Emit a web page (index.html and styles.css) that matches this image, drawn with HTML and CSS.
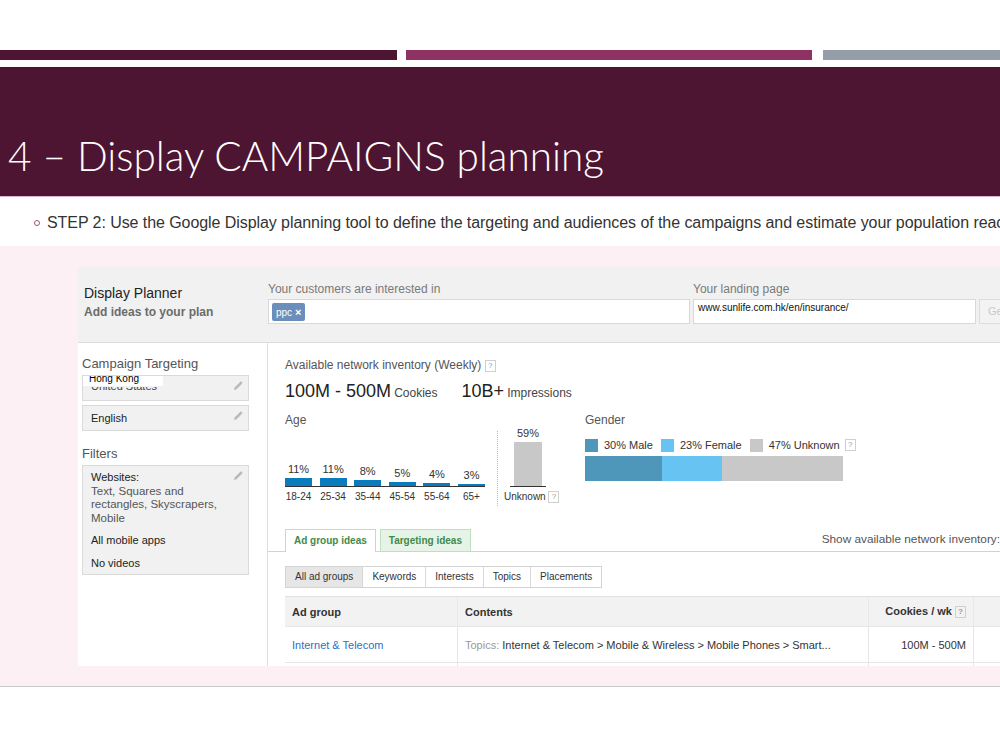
FILE: index.html
```html
<!DOCTYPE html>
<html lang="en">
<head>
    <meta charset="UTF-8">
    <title>Display Campaigns Planning</title>
    <link rel="stylesheet" href="styles.css">
</head>
<body>
    <div class="stripes">
        <span class="stripe dark"></span>
        <span class="stripe plum"></span>
        <span class="stripe grey"></span>
    </div>
    <div class="title-band">
        <h1>4 – Display CAMPAIGNS planning</h1>
    </div>
    <ul class="steps">
        <li>STEP 2: Use the Google Display planning tool to define the targeting and audiences of the campaigns and estimate your population reach</li>
    </ul>

    <div class="shot-panel">
        <div class="planner">
            <div class="planner-head">
                <div class="brand">
                    <div class="brand-title">Display Planner</div>
                    <div class="brand-sub">Add ideas to your plan</div>
                </div>
                <div class="field interest">
                    <label>Your customers are interested in</label>
                    <div class="input"><span class="chip">ppc <b>×</b></span></div>
                </div>
                <div class="field landing">
                    <label>Your landing page</label>
                    <div class="input url">www.sunlife.com.hk/en/insurance/</div>
                </div>
                <div class="field">
                    <label>&nbsp;</label>
                    <div class="get-btn">Get ideas</div>
                </div>
            </div>

            <div class="planner-body">
                <aside class="sidebar">
                    <h4>Campaign Targeting</h4>
                    <div class="tbox location">
                        <span class="new-loc">Hong Kong</span>
                        <div class="old-clip"><span class="old">United States</span></div>
                        <svg class="pencil" viewBox="0 0 12 12"><path d="M1 11 L1.8 8.2 L8.6 1.4 L10.6 3.4 L3.8 10.2 Z"/></svg>
                    </div>
                    <div class="tbox">
                        English
                        <svg class="pencil" viewBox="0 0 12 12"><path d="M1 11 L1.8 8.2 L8.6 1.4 L10.6 3.4 L3.8 10.2 Z"/></svg>
                    </div>
                    <h4 class="filters">Filters</h4>
                    <div class="tbox filter-box">
                        <div class="dark">Websites:</div>
                        <div>Text, Squares and rectangles, Skyscrapers, Mobile</div>
                        <div class="dark gap">All mobile apps</div>
                        <div class="dark gap">No videos</div>
                        <svg class="pencil" viewBox="0 0 12 12"><path d="M1 11 L1.8 8.2 L8.6 1.4 L10.6 3.4 L3.8 10.2 Z"/></svg>
                    </div>
                </aside>

                <section class="content">
                    <div class="inv-title">Available network inventory (Weekly) <span class="help">?</span></div>
                    <div class="totals">
                        <span class="big">100M - 500M</span> <span class="unit">Cookies</span>
                        <span class="big second">10B+</span> <span class="unit">Impressions</span>
                    </div>

                    <div class="demo">
                        <div class="age">
                            <div class="sub-title">Age</div>
                            <div class="age-chart">
                                <div class="age-main">
                                    <div class="plot" id="agePlot"></div>
                                    <div class="x-labels" id="ageLabels"></div>
                                </div>
                                <div class="divider"></div>
                                <div class="age-unknown">
                                    <div class="plot unk" id="unkPlot"></div>
                                    <div class="unk-label">Unknown <span class="help">?</span></div>
                                </div>
                            </div>
                        </div>

                        <div class="gender">
                            <div class="sub-title">Gender</div>
                            <div class="legend">
                                <span class="sw male"></span>30% Male
                                <span class="sw female"></span>23% Female
                                <span class="sw unknown"></span>47% Unknown <span class="help">?</span>
                            </div>
                            <div class="gender-bar" id="genderBar"></div>
                        </div>
                    </div>

                    <div class="tab-row">
                        <div class="tabs">
                            <span class="tab active">Ad group ideas</span>
                            <span class="tab">Targeting ideas</span>
                        </div>
                        <div class="show-inv">Show available network inventory:</div>
                    </div>

                    <div class="btn-group">
                        <span class="on">All ad groups</span>
                        <span>Keywords</span>
                        <span>Interests</span>
                        <span>Topics</span>
                        <span>Placements</span>
                    </div>

                    <table class="ideas">
                        <thead>
                            <tr>
                                <th class="c-group">Ad group</th>
                                <th class="c-contents">Contents</th>
                                <th class="c-cookies">Cookies / wk <span class="help">?</span></th>
                                <th></th>
                            </tr>
                        </thead>
                        <tbody>
                            <tr>
                                <td><a href="#">Internet &amp; Telecom</a></td>
                                <td><span class="muted">Topics:</span> Internet &amp; Telecom &gt; Mobile &amp; Wireless &gt; Mobile Phones &gt; Smart...</td>
                                <td class="num">100M - 500M</td>
                                <td></td>
                            </tr>
                            <tr>
                                <td>&nbsp;</td><td></td><td></td><td></td>
                            </tr>
                        </tbody>
                    </table>
                </section>
            </div>
        </div>
    </div>

    <script>
        // Age split, weekly inventory
        const ages = [
            {label: "18-24", pct: 11},
            {label: "25-34", pct: 11},
            {label: "35-44", pct: 8},
            {label: "45-54", pct: 5},
            {label: "55-64", pct: 4},
            {label: "65+", pct: 3}
        ];
        const unknownAge = 59;
        const scale = 0.74; // px per percent

        const plot = document.getElementById('agePlot');
        const labels = document.getElementById('ageLabels');
        ages.forEach(a => {
            const col = document.createElement('div');
            col.className = 'col';
            col.innerHTML = `<span class="pct">${a.pct}%</span><div class="bar" style="height:${a.pct * scale}px"></div>`;
            plot.appendChild(col);
            const l = document.createElement('span');
            l.textContent = a.label;
            labels.appendChild(l);
        });

        document.getElementById('unkPlot').innerHTML =
            `<div class="col"><span class="pct">${unknownAge}%</span><div class="bar grey" style="height:${unknownAge * scale}px"></div></div>`;

        // Gender split
        const gender = [
            {cls: 'male', pct: 30},
            {cls: 'female', pct: 23},
            {cls: 'unknown', pct: 47}
        ];
        const gbar = document.getElementById('genderBar');
        gender.forEach(g => {
            const seg = document.createElement('div');
            seg.className = 'seg ' + g.cls;
            seg.style.width = g.pct + '%';
            gbar.appendChild(seg);
        });
    </script>
</body>
</html>
```

FILE: styles.css
```css
html, body { margin: 0; padding: 0; }
body { width: 1000px; height: 751px; overflow: hidden; background: #fff; font-family: "Liberation Sans", Arial, sans-serif; }

/* slide header */
.stripes { display: flex; margin-top: 50px; height: 10px; }
.stripe { display: block; height: 10px; }
.stripe.dark { width: 397px; background: #4d1532; }
.stripe.plum { width: 406px; margin-left: 9px; background: #8e3163; }
.stripe.grey { flex: 1; margin-left: 11px; background: #959ea8; }

.title-band { margin-top: 7px; height: 130px; background: #4d1532; border-bottom: 1px solid #d9b8c8; box-sizing: border-box; }
.title-band h1 { margin: 0; padding: 65px 0 0 8px; font-family: Lato, "Liberation Sans", sans-serif; font-weight: 300; font-size: 40.5px; line-height: 48px; color: #fff; white-space: nowrap; }

.steps { margin: 0; padding: 15px 0 12px 47px; list-style: none; white-space: nowrap; overflow: hidden; }
.steps li { position: relative; font-family: "Liberation Sans Narrow", "Liberation Sans", sans-serif; font-size: 16px; letter-spacing: -0.07px; line-height: 22px; color: #333; }
.steps li::before { content: ""; position: absolute; left: -13px; top: 8px; width: 4px; height: 4px; border: 1px solid #a3517f; border-radius: 50%; }

/* pasted screenshot of the planner */
.shot-panel { height: 441px; background: #fcf0f5; border-bottom: 1px solid #c9c9c9; box-sizing: border-box; padding: 21px 0 0 78px; overflow: hidden; }
.planner { width: 924px; height: 399px; overflow: hidden; background: #fff; color: #333; font-size: 11px; }

.planner-head { display: flex; height: 76px; background: #f1f1f1; border-bottom: 1px solid #dcdcdc; box-sizing: border-box; }
.brand { width: 184px; padding: 18px 0 0 6px; flex-shrink: 0; }
.brand-title { font-size: 14px; line-height: 16px; color: #222; }
.brand-sub { margin-top: 3px; font-size: 12px; line-height: 16px; font-weight: bold; color: #6b6b6b; }
.field { padding-top: 15px; margin-right: 3px; flex-shrink: 0; }
.field label { display: block; font-size: 12px; line-height: 14px; color: #7a7a7a; margin-bottom: 3px; }
.interest .input { width: 422px; }
.landing .input { width: 283px; }
.input { height: 25px; box-sizing: border-box; background: #fff; border: 1px solid #d8d8d8; padding: 3px; }
.chip { display: inline-block; height: 18px; line-height: 18px; padding: 0 4px; background: #6b8fba; color: #fff; font-size: 10px; border-radius: 2px; }
.chip b { font-size: 11px; }
.input.url { padding: 1px 4px; font-size: 10px; line-height: 14px; color: #111; }
.get-btn { height: 25px; box-sizing: border-box; border: 1px solid #ddd; background: #f3f3f3; color: #c9c9c9; font-size: 11px; line-height: 23px; padding: 0 8px; white-space: nowrap; }

.planner-body { display: flex; }
.sidebar { width: 190px; flex-shrink: 0; padding: 13px 18px 0 4px; box-sizing: border-box; border-right: 1px solid #dedede; height: 330px; }
.sidebar h4 { margin: 0 0 3px; font-size: 13px; line-height: 16px; font-weight: normal; color: #555; }
.sidebar h4.filters { margin-top: 15px; }
.tbox { position: relative; background: #f1f1f1; border: 1px solid #dadada; margin-bottom: 4px; height: 26px; box-sizing: border-box; padding: 0 8px; font-size: 11px; line-height: 24px; color: #222; }
.tbox .pencil { position: absolute; right: 4px; top: 4px; width: 11px; height: 11px; fill: #b9b9b9; }
.location { overflow: hidden; }
.location .new-loc { position: absolute; left: 0; top: -4px; width: 68px; padding: 0 6px; background: #fff; font-size: 10px; line-height: 14px; color: #000; }
.location .old-clip { position: absolute; left: 8px; top: 11px; height: 5px; overflow: hidden; }
.location .old { display: block; margin-top: -7px; line-height: 13px; color: #444; }
.filter-box { height: 110px; padding: 5px 24px 0 8px; font-size: 11.5px; line-height: 13.5px; color: #555; }
.filter-box .dark { color: #222; font-size: 11px; }
.filter-box .gap { margin-top: 9px; }

.content { flex: 1; min-width: 0; padding: 14px 0 0 17px; }
.help { display: inline-block; width: 9px; height: 10px; border: 1px solid #cfcfcf; font-size: 8px; line-height: 10px; text-align: center; color: #9a9a9a; vertical-align: 1px; }
.inv-title { font-size: 12px; line-height: 16px; color: #555; }
.totals { margin-top: 7px; line-height: 22px; color: #222; white-space: nowrap; }
.totals .big { font-size: 18px; }
.totals .second { margin-left: 21px; }
.totals .unit { font-size: 12px; color: #444; }

.demo { display: flex; margin-top: 8px; }
.sub-title { font-size: 12px; line-height: 16px; color: #555; }
.age { width: 300px; flex-shrink: 0; }
.age-chart { display: flex; height: 78px; }
.plot { display: flex; align-items: flex-end; gap: 7.6px; height: 58px; border-bottom: 1px solid #333; }
.col { display: flex; flex-direction: column; align-items: center; width: 27px; }
.pct { font-size: 11px; line-height: 12px; margin-bottom: 3px; color: #333; }
.bar { width: 27px; background: #0a7bbd; }
.bar.grey { width: 28px; background: #c8c8c8; margin: 0; }
.x-labels { display: flex; gap: 7.6px; margin-top: 3px; font-size: 10px; line-height: 14px; color: #333; }
.x-labels span { width: 27px; text-align: center; }
.divider { width: 0; margin: 3px 12px 0 12px; border-left: 1px dotted #bbb; }
.plot.unk { width: 36px; justify-content: center; }
.plot.unk .col { width: 36px; }
.unk-label { margin: 3px 0 0 -6px; font-size: 10px; line-height: 14px; color: #333; white-space: nowrap; }

.legend { display: flex; align-items: center; margin-top: 10px; font-size: 11px; line-height: 14px; color: #333; white-space: nowrap; }
.sw { display: inline-block; width: 13px; height: 13px; margin: 0 6px 0 0; }
.sw.female, .sw.unknown { margin-left: 8px; }
.legend .help { margin-left: 5px; }
.male { background: #4e97ba; }
.female { background: #67c3f1; }
.unknown { background: #c8c8c8; }
.gender-bar { display: flex; width: 258px; height: 25px; margin-top: 4px; }
.seg { height: 25px; }

.tab-row { display: flex; justify-content: space-between; align-items: flex-end; margin: 22px 0 0 -17px; padding-left: 17px; border-bottom: 1px solid #bfe0c0; height: 23px; }
.tabs { display: flex; gap: 4px; }
.tab { height: 22px; box-sizing: border-box; padding: 0 8px; border: 1px solid #bfe0c0; border-bottom: none; background: #e6f3e7; font-size: 10px; line-height: 22px; font-weight: bold; color: #3f8a47; margin-bottom: -1px; }
.tab.active { background: #fff; height: 23px; }
.show-inv { font-size: 11.8px; line-height: 16px; color: #555; padding-bottom: 4px; white-space: nowrap; margin-right: 2px; }

.btn-group { display: inline-flex; margin-top: 14px; border: 1px solid #d3d3d3; }
.btn-group span { height: 20px; line-height: 20px; padding: 0 9px; font-size: 10px; color: #333; border-left: 1px solid #d8d8d8; background: #fff; }
.btn-group span:first-child { border-left: none; }
.btn-group .on { background: #e6e6e6; }

.ideas { margin-top: 8px; border-collapse: collapse; width: 780px; font-size: 11px; color: #333; }
.ideas th { height: 29px; background: #f2f2f2; text-align: left; font-weight: bold; padding: 0 7px; border-top: 1px solid #e0e0e0; border-left: 1px solid #e8e8e8; }
.ideas th:first-child, .ideas td:first-child { border-left: none; }
.ideas .c-group { width: 158px; }
.ideas .c-contents { width: 396px; }
.ideas .c-cookies { width: 90px; text-align: right; }
.ideas td { height: 35px; padding: 0 7px; border-top: 1px solid #e6e6e6; border-left: 1px solid #e6e6e6; white-space: nowrap; }
.ideas a { color: #2d6fc1; text-decoration: none; }
.ideas .muted { color: #999; }
.ideas .num { text-align: right; }
```
